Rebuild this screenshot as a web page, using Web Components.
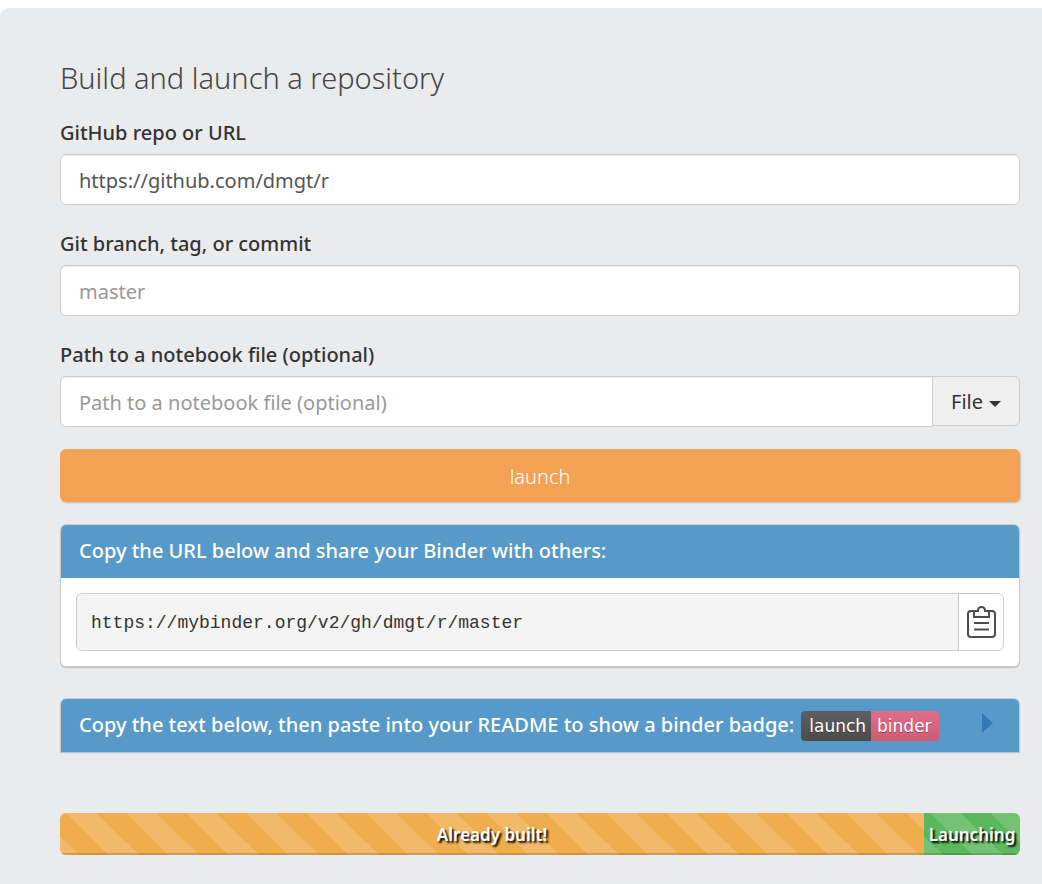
<!DOCTYPE html>
<html lang="en">
<head>
<meta charset="utf-8">
<meta name="viewport" content="width=device-width, initial-scale=1">
<title>Binder</title>
<style>
body { margin: 0; background: #fff; font: 20px/28px "Noto Sans", sans-serif; color: #333; }
</style>
</head>
<body>
<binder-page>
  <text-field label="GitHub repo or URL" value="https://github.com/dmgt/r"></text-field>
  <text-field label="Git branch, tag, or commit" placeholder="master"></text-field>
  <text-field joined label="Path to a notebook file (optional)" placeholder="Path to a notebook file (optional)"><file-menu slot="addon"></file-menu></text-field>
  <launch-button>launch</launch-button>
  <share-panel>
    <span slot="title">Copy the URL below and share your Binder with others:</span>
    <copy-url url="https://mybinder.org/v2/gh/dmgt/r/master"></copy-url>
  </share-panel>
  <share-panel collapsed>
    <span slot="title">Copy the text below, then paste into your README to show a binder badge:</span>
    <binder-badge slot="extra"></binder-badge>
  </share-panel>
  <build-progress></build-progress>
</binder-page>
<script>
const define = (name, html, setup) => customElements.define(name, class extends HTMLElement {
  constructor() {
    super();
    const t = document.createElement("template");
    t.innerHTML = "<style>*,:host{box-sizing:border-box}</style>" + html;
    this.attachShadow({ mode: "open" }).append(t.content.cloneNode(true));
  }
  connectedCallback() { if (setup) setup(this, this.shadowRoot); }
});

define("binder-page", `
<style>
:host { display: block; padding-top: 8px; }
main { background: #eaebed; border-radius: 9px 0 0 0; min-height: calc(100vh - 8px); padding: 49px 22px 29px 60px; }
h1 { margin: 0 0 20px; font-size: 29px; line-height: 42px; font-weight: 300; color: #444; }
form { display: flex; flex-direction: column; }
</style>
<main><h1>Build and launch a repository</h1><form><slot></slot></form></main>`);

define("text-field", `
<style>
:host { display: block; margin-bottom: 25px; }
:host([joined]) { margin-bottom: 22px; }
label { display: block; font-weight: 500; margin: 0 0 7px; }
.row { display: flex; align-items: flex-start; }
input { flex: 1; min-width: 0; height: 51px; padding: 2px 18px 0; border: 1px solid #ccc; border-radius: 6px;
  background: #fff; box-shadow: inset 0 1px 1px rgba(0,0,0,.08); font: inherit; font-weight: 400; color: #555; outline: 0; }
input::placeholder { color: #999; opacity: 1; }
:host([joined]) input { border-radius: 6px 0 0 6px; }
</style>
<label for="field"></label><div class="row"><input id="field" type="text"><slot name="addon"></slot></div>`,
(el, root) => {
  const input = root.querySelector("input");
  root.querySelector("label").textContent = el.getAttribute("label");
  input.value = el.getAttribute("value") || "";
  input.placeholder = el.getAttribute("placeholder") || "";
});

define("file-menu", `
<style>
:host { display: block; margin-left: -1px; }
button { display: flex; align-items: center; gap: 6px; height: 50px; padding: 2px 18px 0; border: 1px solid #ccc;
  border-radius: 0 6px 6px 0; background: #efefef; color: #333; font: inherit; font-weight: 400; }
i { border: 6px solid transparent; border-top-color: #333; border-bottom: 0; margin-top: 4px; }
</style>
<button type="button" aria-haspopup="true">File<i></i></button>`);

define("launch-button", `
<style>
:host { display: block; margin-bottom: 22px; }
button { display: block; width: 100%; height: 53px; padding: 2px 0 0; border: 0; border-radius: 6px; background: #f3a253;
  color: #fff; font: inherit; font-weight: 300; box-shadow: 1px 1px 2px rgba(0,0,0,.2); }
</style>
<button type="button"><slot></slot></button>`);

define("share-panel", `
<style>
:host { display: block; margin-bottom: 31px; }
section { border: 1px solid #ccc; border-radius: 6px; background: #fff; box-shadow: 0 1px 1px rgba(0,0,0,.2); overflow: hidden; }
header { display: flex; align-items: center; gap: 7px; min-height: 53px; padding: 0 18px; background: #579aca; color: #fff; font-weight: 500; }
::slotted(span) { padding-bottom: 2px; }
.body { padding: 15px; }
svg { display: none; margin-left: auto; margin-right: 8px; }
:host([collapsed]) { margin-bottom: 61px; }
:host([collapsed]) section { border-radius: 6px 6px 0 0; border-bottom: 0; }
:host([collapsed]) .body { display: none; }
:host([collapsed]) svg { display: block; }
</style>
<section><header><slot name="title"></slot><slot name="extra"></slot>
<svg width="11" height="26" viewBox="0 0 11 26" aria-hidden="true"><path d="M0 0 11 10 0 20Z" fill="#337ab7"/></svg></header>
<div class="body"><slot></slot></div></section>`);

define("copy-url", `
<style>
:host { display: flex; height: 58px; border: 1px solid #ccc; border-radius: 6px; overflow: hidden; }
pre { flex: 1; min-width: 0; margin: 0; padding: 15px 14px; background: #f4f4f4; overflow: hidden;
  font: 18px/28px "Liberation Mono", monospace; color: #333; }
button { width: 45px; padding: 0; border: 0; border-left: 1px solid #ccc; background: #fff; display: flex; align-items: center; justify-content: center; }
</style>
<pre></pre><button type="button" aria-label="Copy to clipboard">
<svg width="30" height="34" viewBox="0 0 30 34" fill="none" stroke="#4d4d4d" stroke-width="2">
<path d="M8 6H5Q2 6 2 9V29Q2 32 5 32H26Q29 32 29 29V9Q29 6 26 6H23"/>
<path d="M8 6H12Q12 2 15.500 2Q19 2 19 6H23V12H8Z"/><path d="M8 18H23M8 24.500H23"/></svg></button>`,
(el, root) => { root.querySelector("pre").textContent = el.getAttribute("url"); });

define("binder-badge", `
<style>
:host { display: flex; height: 30px; border-radius: 4px; overflow: hidden; color: #fff;
  font: 400 17px/30px "DejaVu Sans", sans-serif; text-shadow: 0 1px 0 rgba(1,1,1,.35); }
span { padding: 0 5px 0 8px; background: linear-gradient(#5f5f5f, #4b4b4b); }
span + span { padding: 0 7px 0 6px; background: linear-gradient(#e16c87, #cf5c77); }
</style>
<span>launch</span><span>binder</span>`);

define("build-progress", `
<style>
:host { display: flex; height: 42px; border-radius: 6px; overflow: hidden; color: #fff; text-align: center;
  font: 600 17px/42px "Noto Sans", sans-serif; text-shadow: 2px 2px 2px #000; }
div { padding-top: 1px; white-space: nowrap; overflow: hidden; box-shadow: inset 0 -2px 0 rgba(0,0,0,.15);
  background: #f0ad4e linear-gradient(45deg, rgba(255,255,255,.15) 25%, transparent 25%, transparent 50%, rgba(255,255,255,.15) 50%, rgba(255,255,255,.15) 75%, transparent 75%) 7px 0 / 60px 60px; }
.built { width: 90%; }
.launching { width: 10%; background-color: #5cb85c; }
</style>
<div class="built">Already built!</div><div class="launching">Launching</div>`);
</script>
</body>
</html>
